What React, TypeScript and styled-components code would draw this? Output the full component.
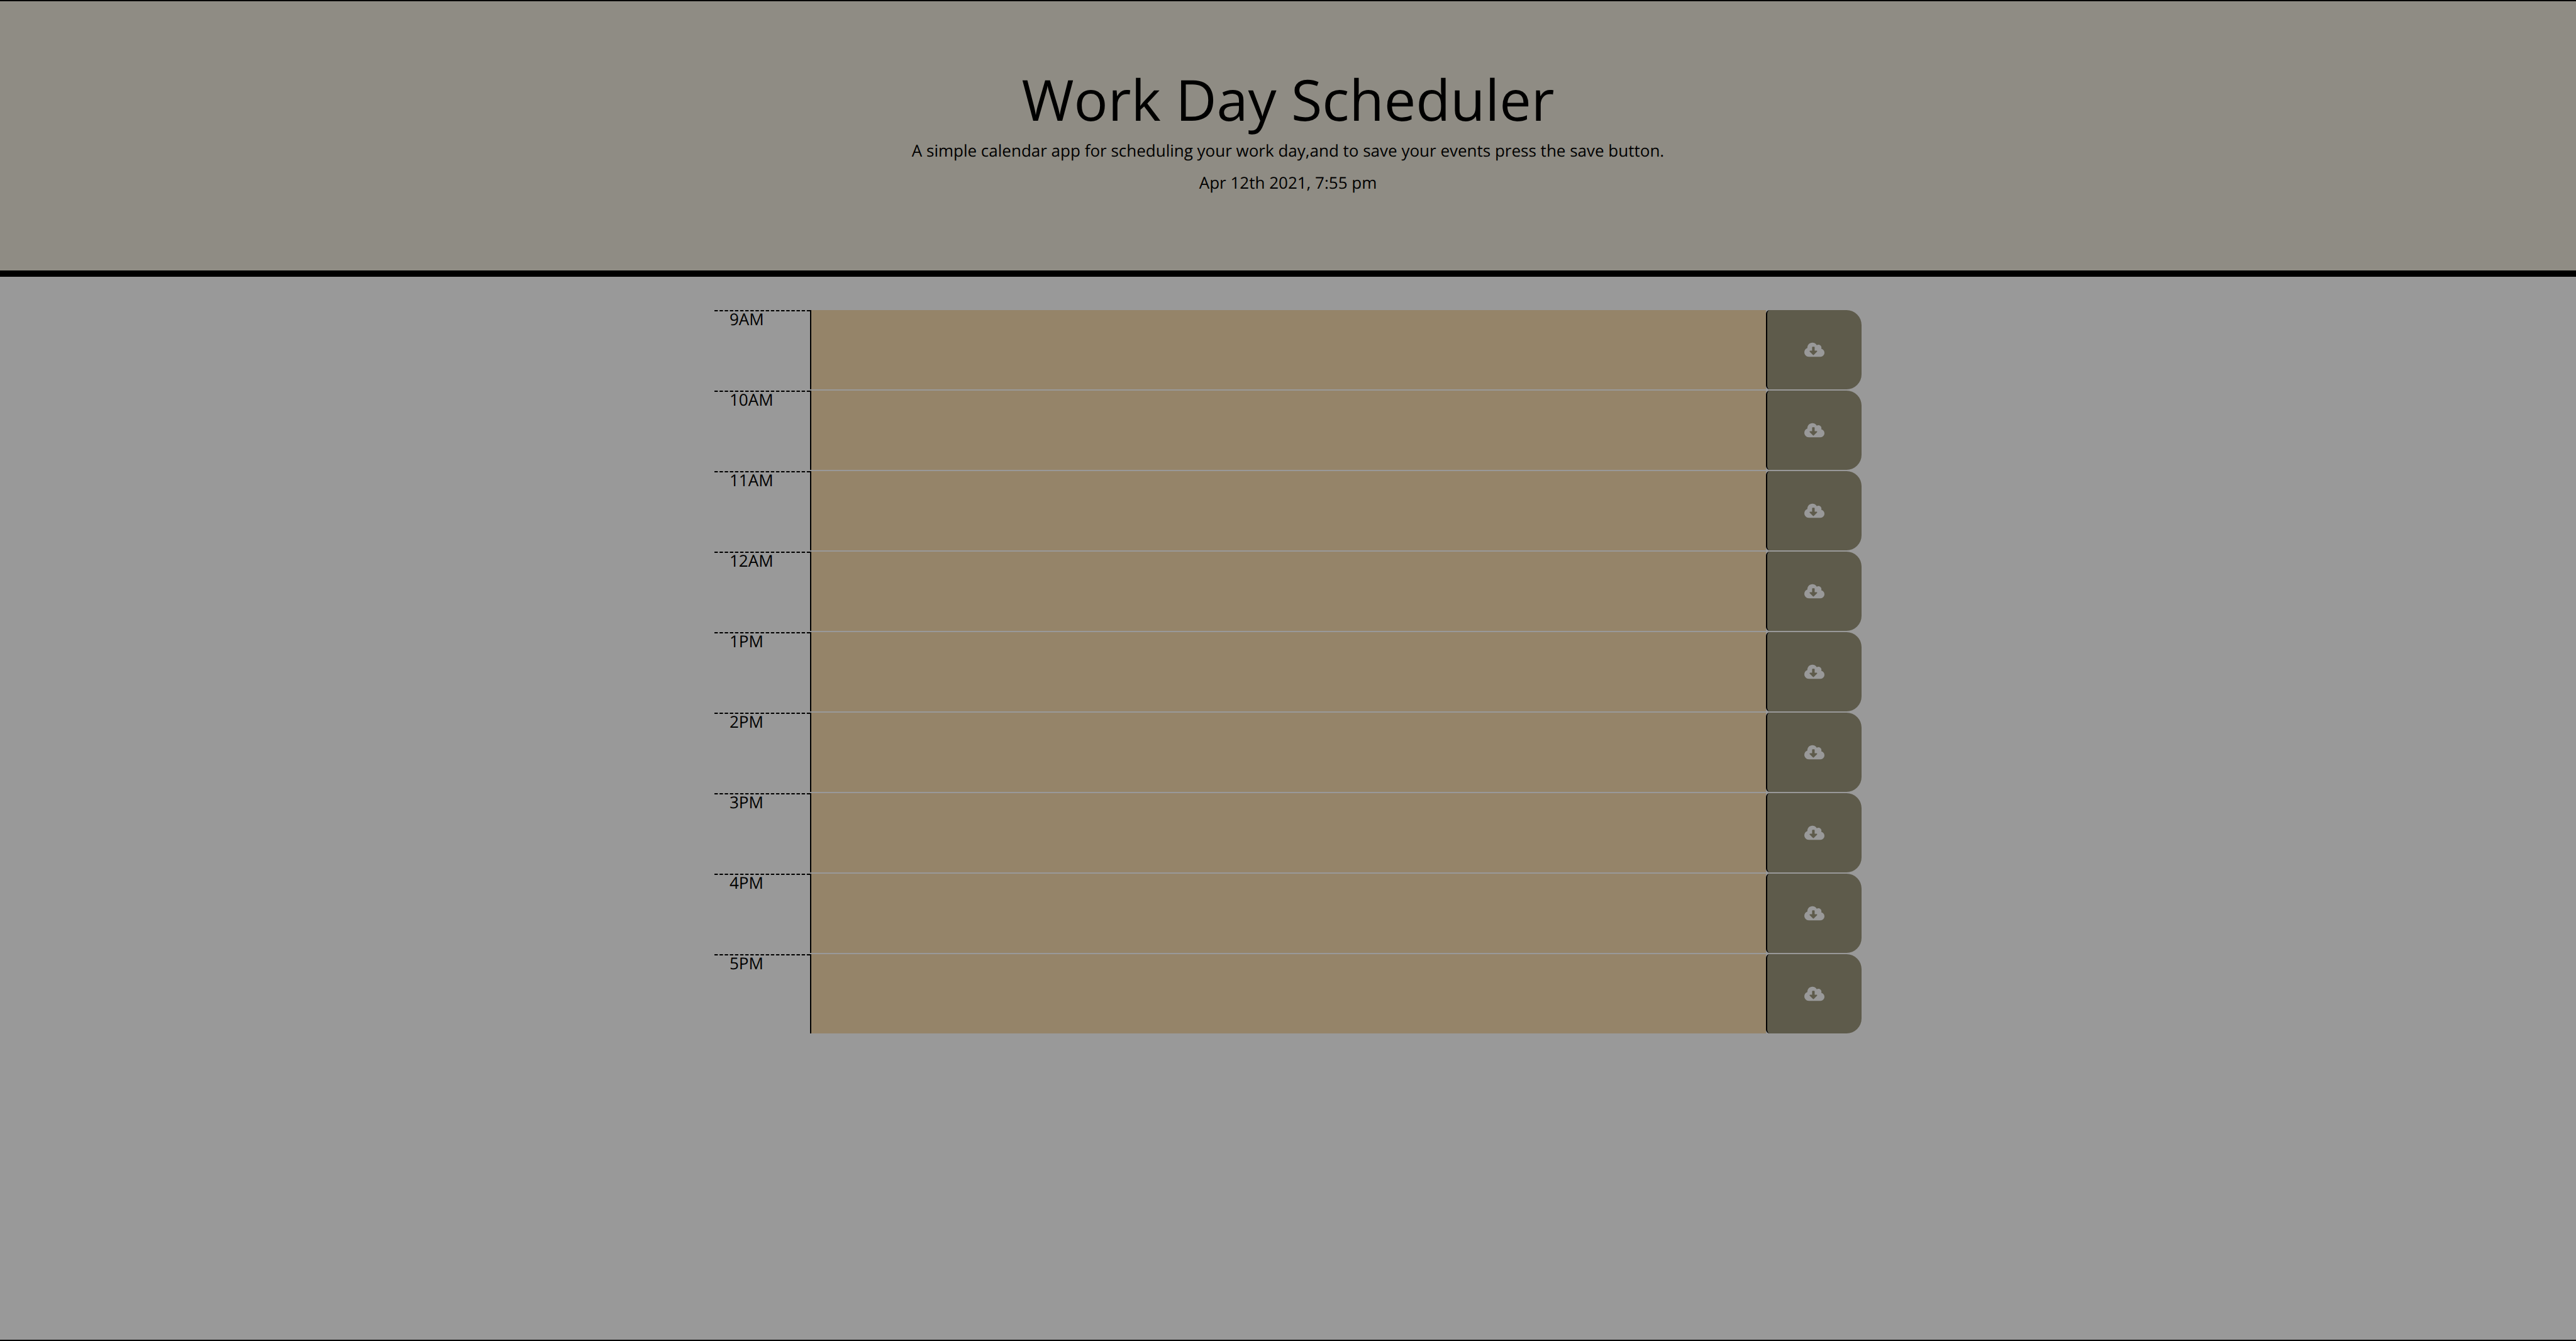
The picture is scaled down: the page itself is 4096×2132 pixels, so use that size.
import React, { useState } from "react";
import styled, { createGlobalStyle } from "styled-components";
import { FaCloudDownloadAlt } from "react-icons/fa";

const GlobalStyle = createGlobalStyle`
  *, *::before, *::after { box-sizing: border-box; }
  body {
    margin: 0;
    background: #999999;
    color: #000;
    font-family: "Open Sans", "Noto Sans", sans-serif;
    font-size: 26px;
    line-height: 39px;
    text-rendering: geometricPrecision;
  }
`;

const Page = styled.div`
  min-height: 100vh;
  border-top: 2px solid #000;
  border-bottom: 2px solid #000;
`;

const Header = styled.header`
  padding: 98px 24px 108px;
  background: #8f8c84;
  border-bottom: 10px solid #000;
  text-align: center;
`;

const Title = styled.h1`
  margin: 0 0 4px;
  font-size: 90px;
  font-weight: 400;
  line-height: 116px;
`;

const Lead = styled.p`
  display: block;
  margin: 0 0 12px;
`;

const Schedule = styled.main`
  width: 100%;
  max-width: 1824px;
  margin: 0 auto;
  padding-top: 53px;
  display: grid;
  gap: 2px;
`;

const TimeBlock = styled.form`
  display: grid;
  grid-template-columns: 1fr 10fr 1fr;
  height: 126px;
`;

const Hour = styled.label`
  padding: 0 24px;
  background-image: linear-gradient(to right, #000 5px, transparent 5px);
  background-size: calc((100% - 5px) / 18) 2px;
  background-repeat: repeat-x;
  line-height: 28px;
`;

const EventText = styled.textarea`
  width: 100%;
  height: 100%;
  padding: 4px 8px;
  border: 0;
  border-left: 2px solid #000;
  border-radius: 0;
  outline: 0;
  resize: none;
  background: #958469;
  color: #000;
  font: inherit;
`;

const SaveButton = styled.button`
  display: flex;
  align-items: center;
  justify-content: center;
  padding: 0;
  border: 0;
  border-left: 2px solid #000;
  border-radius: 6px 24px 24px 6px;
  background: #5e5b4b;
  color: #999999;
`;

const SaveIcon = styled(FaCloudDownloadAlt)`
  width: 32px;
  height: 26px;
`;

const HOURS = ["9AM", "10AM", "11AM", "12AM", "1PM", "2PM", "3PM", "4PM", "5PM"];

function HourRow({ hour }: { hour: string }) {
  const [text, setText] = useState("");
  const id = `event-${hour}`;
  return (
    <TimeBlock onSubmit={(e: React.FormEvent) => e.preventDefault()}>
      <Hour htmlFor={id}>{hour}</Hour>
      <EventText
        id={id}
        value={text}
        onChange={(e: React.ChangeEvent<HTMLTextAreaElement>) => setText(e.target.value)}
      />
      <SaveButton type="submit" aria-label={`Save ${hour}`}>
        <SaveIcon aria-hidden />
      </SaveButton>
    </TimeBlock>
  );
}

export default function App() {
  return (
    <>
      <GlobalStyle />
      <Page>
        <Header>
          <Title>Work Day Scheduler</Title>
          <Lead>
            A simple calendar app for scheduling your work day,and to save your events press the save
            button.
          </Lead>
          <Lead as="time">Apr 12th 2021, 7:55 pm</Lead>
        </Header>
        <Schedule>
          {HOURS.map((hour) => (
            <HourRow key={hour} hour={hour} />
          ))}
        </Schedule>
      </Page>
    </>
  );
}
